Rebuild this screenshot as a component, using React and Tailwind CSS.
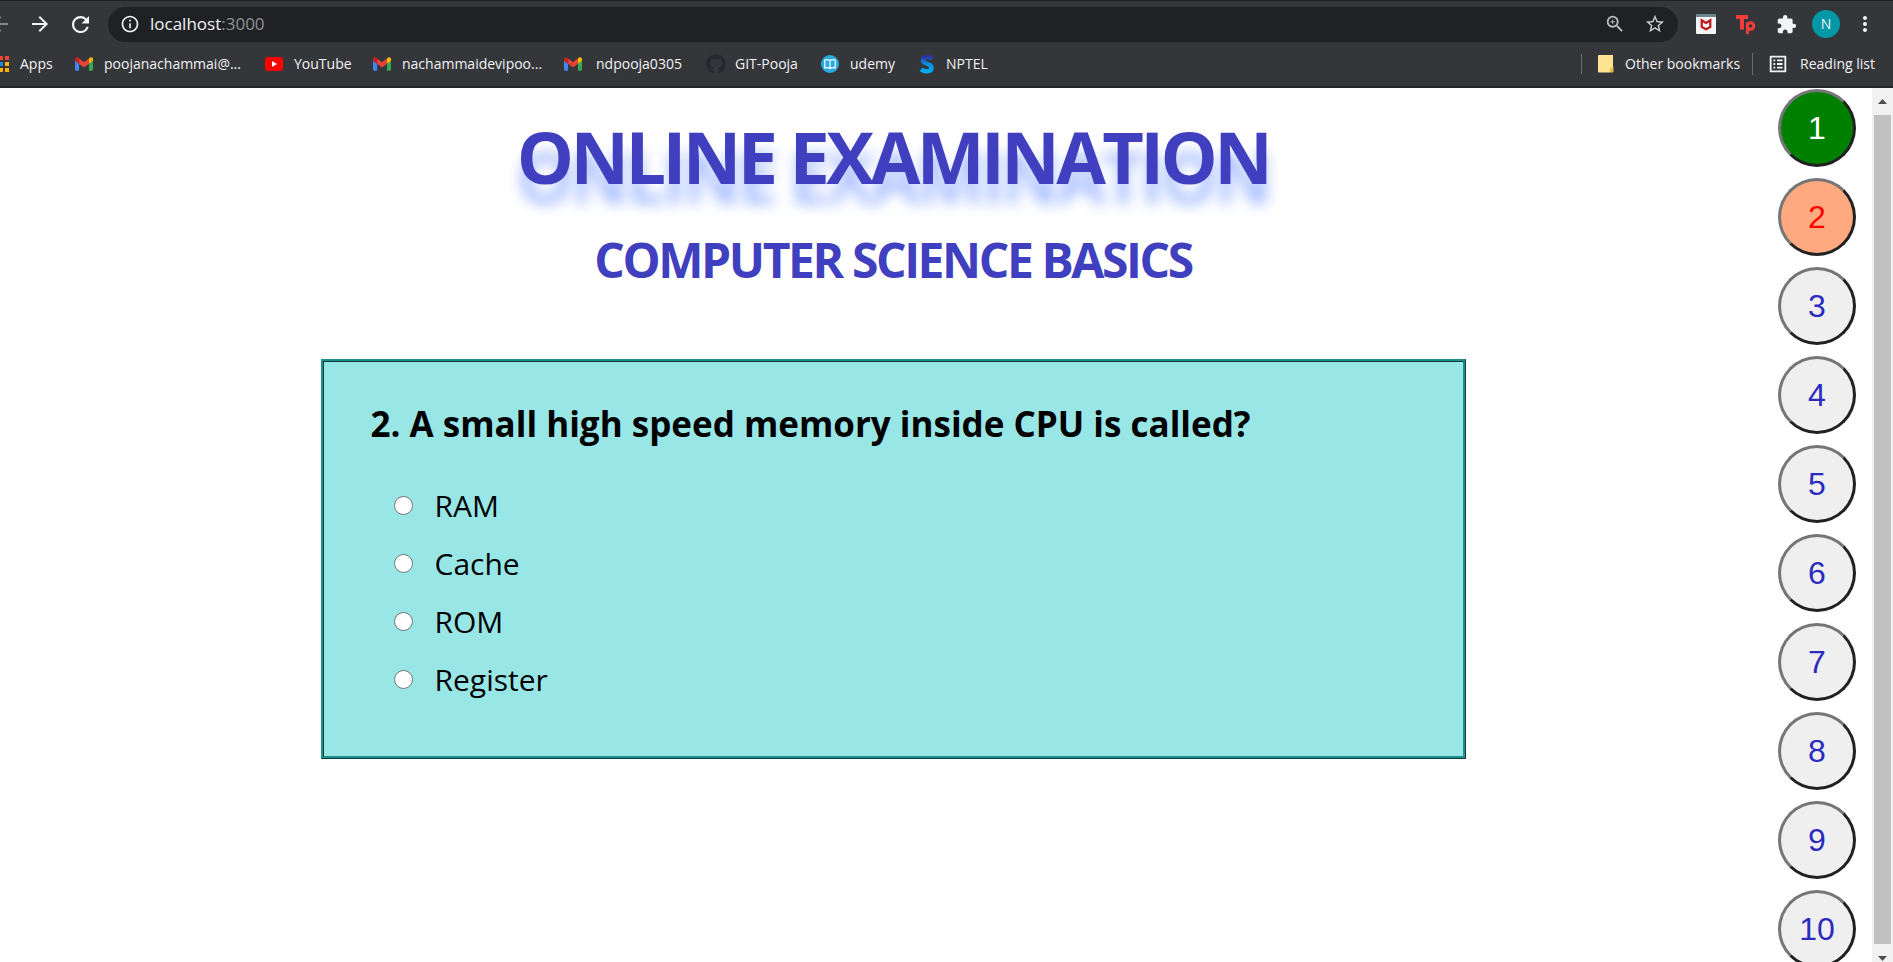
import { MdExtension, MdMoreVert, MdStarBorder, MdZoomIn, MdArrowBack, MdArrowForward, MdInfoOutline, MdOutlineListAlt } from "react-icons/md";
import { FaGithub } from "react-icons/fa";

function GmailIcon() {
  return (
    <svg viewBox="52 42 88 66" className="h-[14px] w-[18px]" aria-hidden="true">
      <path fill="#4285f4" d="M58 108h14V74L52 59v43c0 3.32 2.69 6 6 6" />
      <path fill="#34a853" d="M120 108h14c3.32 0 6-2.69 6-6V59l-20 15" />
      <path fill="#fbbc04" d="M120 48v26l20-15v-8c0-7.42-8.47-11.65-14.4-7.2" />
      <path fill="#ea4335" d="M72 74V48l24 18 24-18v26L96 92" />
      <path fill="#c5221f" d="M52 51v8l20 15V48l-5.6-4.2c-5.94-4.45-14.4-.22-14.4 7.2" />
    </svg>
  );
}

function AppsGridIcon() {
  const cells = [
    ["#f44336", 0, 0], ["#f44336", 6, 0], ["#f44336", 12, 0],
    ["#4caf50", 0, 6], ["#1e88e5", 6, 6], ["#ffb300", 12, 6],
    ["#4caf50", 0, 12], ["#ffb300", 6, 12], ["#ffb300", 12, 12],
  ];
  return (
    <svg viewBox="0 0 16 16" className="h-4 w-4" aria-hidden="true">
      {cells.map(([fill, x, y]) => (
        <rect key={`${x}-${y}`} x={x} y={y} width="4" height="4" fill={fill} />
      ))}
    </svg>
  );
}

function YouTubeIcon() {
  return (
    <svg viewBox="0 0 18 14" className="h-[14px] w-[18px]" aria-hidden="true">
      <rect width="18" height="14" rx="3" fill="#f00" />
      <path fill="#fff" d="M7 4v6l5-3z" />
    </svg>
  );
}

function UdemyIcon() {
  return (
    <svg viewBox="0 0 18 18" className="h-[18px] w-[18px]" aria-hidden="true">
      <circle cx="9" cy="9" r="9" fill="#29abe2" />
      <path fill="none" stroke="#fff" strokeWidth="1.2" d="M9 5.5Q6.5 4.2 3.8 5v8Q6.5 12.2 9 13.5Q11.5 12.2 14.2 13V5Q11.5 4.2 9 5.5V13.5" />
    </svg>
  );
}

function NptelIcon() {
  return (
    <svg viewBox="0 0 16 20" className="h-5 w-4" aria-hidden="true">
      <defs>
        <linearGradient id="nptel" x1="0" y1="0" x2="0" y2="1">
          <stop offset="0" stopColor="#2b35a0" />
          <stop offset="0.5" stopColor="#0c8fe0" />
          <stop offset="1" stopColor="#00aaf0" />
        </linearGradient>
      </defs>
      <path fill="none" stroke="url(#nptel)" strokeWidth="4.6" d="M13.3 4.5C10 2 4 2.5 4 6.2C4 10.2 12.5 9 12.5 13.5C12.5 18 6 18.2 2 15.3" />
    </svg>
  );
}

function NoteIcon() {
  return (
    <svg viewBox="0 0 16 18" className="h-[18px] w-4" aria-hidden="true">
      <path fill="#fee391" d="M1 0h14v12l-3 5.5H1a1 1 0 0 1-1-1V1a1 1 0 0 1 1-1z" />
      <path fill="#e3c04c" d="M12 17.5V13.5l3.5-2v5a1 1 0 0 1-1 1z" />
    </svg>
  );
}

function ReloadIcon() {
  return (
    <svg viewBox="4 4 16 16" className="h-[17px] w-[17px]" fill="currentColor" aria-hidden="true">
      <path d="M17.65 6.35A7.958 7.958 0 0 0 12 4a8 8 0 1 0 7.73 10h-2.08A5.99 5.99 0 0 1 12 18a6 6 0 1 1 0-12c1.66 0 3.14.69 4.22 1.78L13 11h7V4z" />
    </svg>
  );
}

function ShieldExtensionIcon() {
  return (
    <svg viewBox="0 0 20 20" className="h-5 w-5" aria-hidden="true">
      <rect width="20" height="20" rx="1" fill="#f4f6f6" />
      <rect width="20" height="3" fill="#6d8790" />
      <path fill="none" stroke="#c01818" strokeWidth="2.2" d="M5.7 6.3V13l4.3 2.2 4.3-2.2V6.3L10 9z" />
    </svg>
  );
}

function TpExtensionIcon() {
  return (
    <svg viewBox="0 0 20 20" className="h-5 w-5" fill="none" stroke="#f23d3a" aria-hidden="true">
      <path strokeWidth="4" d="M0 3h12M6 3v12.5" />
      <path strokeWidth="3" d="M11.5 20V8.5" />
      <circle cx="14.5" cy="12" r="3.3" strokeWidth="3" />
    </svg>
  );
}

const bookmarks = [
  { label: "Apps", icon: <AppsGridIcon />, item: "w-[82px]", gap: "gap-[11px]" },
  { label: "poojanachammai@...", icon: <GmailIcon />, item: "w-[190px]", gap: "gap-[11px]" },
  { label: "YouTube", icon: <YouTubeIcon />, item: "w-[108px]", gap: "gap-[11px]" },
  { label: "nachammaidevipoo...", icon: <GmailIcon />, item: "w-[191px]", gap: "gap-[11px]" },
  { label: "ndpooja0305", icon: <GmailIcon />, item: "w-[142px]", gap: "gap-[14px]" },
  { label: "GIT-Pooja", icon: <FaGithub className="h-5 w-5 text-[#24292e]" />, item: "w-[115px]", gap: "gap-[9px]" },
  { label: "udemy", icon: <UdemyIcon />, item: "w-[98px]", gap: "gap-[11px]" },
  { label: "NPTEL", icon: <NptelIcon />, item: "", gap: "gap-[11px]" },
];

function BrowserBar() {
  return (
    <header className="shrink-0 border-t border-b-2 border-t-[#202124] border-b-[#242528] bg-[#35363a] text-[#f1f3f4]">
      <div className="flex h-[46px] items-center">
        <button aria-label="Back" className="-ml-3 text-[#85868a]"><MdArrowBack className="h-6 w-6" /></button>
        <button aria-label="Forward" className="ml-4"><MdArrowForward className="h-6 w-6" /></button>
        <button aria-label="Reload" className="ml-5"><ReloadIcon /></button>
        <div className="ml-[19px] flex h-[35px] flex-1 items-center rounded-full bg-[#202124] px-3">
          <MdInfoOutline className="h-5 w-5 shrink-0" />
          <div className="ml-2.5 flex-1 text-[17px]">localhost<span className="text-[#8f9194]">:3000</span></div>
          <button aria-label="Zoom" className="text-[#b9bbbe]"><MdZoomIn className="h-[22px] w-[22px]" /></button>
          <button aria-label="Bookmark this page" className="ml-[18px] text-[#c8cacd]"><MdStarBorder className="h-[22px] w-[22px]" /></button>
        </div>
        <div className="ml-[18px] flex items-center">
          <button aria-label="Shield extension"><ShieldExtensionIcon /></button>
          <button aria-label="Tp extension" className="ml-5"><TpExtensionIcon /></button>
          <button aria-label="Extensions" className="ml-5"><MdExtension className="h-[21px] w-[21px]" /></button>
          <button aria-label="Profile" className="ml-[15px] h-7 w-7 rounded-full bg-[#0097a7] text-sm">N</button>
          <button aria-label="Menu" className="mr-4 ml-[13px]"><MdMoreVert className="h-6 w-6" /></button>
        </div>
      </div>
      <nav className="flex h-[39px] items-center pb-1.5 text-sm whitespace-nowrap">
        <div className="-ml-[7px] flex flex-1 items-center">
          {bookmarks.map((b) => (
            <a key={b.label} href="#" className={`flex shrink-0 items-center ${b.gap} ${b.item}`}>
              {b.icon}
              {b.label}
            </a>
          ))}
        </div>
        <a href="#" className="flex items-center gap-[11px] border-l border-[#6b6c70] pl-4"><NoteIcon />Other bookmarks</a>
        <a href="#" className="mr-[18px] ml-3 flex items-center gap-[11px] border-l border-[#6b6c70] pl-3.5"><MdOutlineListAlt className="h-[22px] w-[22px]" />Reading list</a>
      </nav>
    </header>
  );
}

const options = ["RAM", "Cache", "ROM", "Register"];

const statusStyles = {
  answered: "bg-[#008000] text-white",
  current: "bg-[#ffa980] text-[#ff0000]",
  open: "bg-[#efefef] text-[#2b2bc0]",
};

const questions = Array.from({ length: 10 }, (_, i) => ({
  number: i + 1,
  status: i === 0 ? "answered" : i === 1 ? "current" : "open",
}));

function Question() {
  return (
    <section className="mt-[65px] w-full max-w-[1145px] border-[3px] border-[#20908d] bg-[#99e6e6] pt-[38px] pb-[55px] pl-[47px] text-black [border-style:ridge]">
      <h3 id="question" className="text-[35px] leading-[48px] font-bold">2. A small high speed memory inside CPU is called?</h3>
      <div role="radiogroup" aria-labelledby="question" className="mt-[35px] flex flex-col gap-[14px] pl-[23px]">
        {options.map((option) => (
          <label key={option} className="flex h-11 items-center gap-[22px] text-[30px]">
            <input type="radio" name="answer" className="h-[19px] w-[19px] appearance-none rounded-full border border-[#767676] bg-white checked:border-[6px] checked:border-[#0075ff]" />
            {option}
          </label>
        ))}
      </div>
    </section>
  );
}

function ScrollBar() {
  return (
    <div aria-hidden="true" className="flex w-[21px] shrink-0 flex-col items-center bg-[#f1f1f1]">
      <div className="flex h-[27px] items-center">
        <svg viewBox="0 0 9 5" className="h-[5px] w-[9px]"><path fill="#505050" d="M0 5L4.5 0L9 5z" /></svg>
      </div>
      <div className="w-[17px] flex-1 bg-[#c1c1c1]" />
      <div className="flex h-[18px] items-end pb-px">
        <svg viewBox="0 0 9 5" className="h-[5px] w-[9px]"><path fill="#505050" d="M0 0L4.5 5L9 0z" /></svg>
      </div>
    </div>
  );
}

export default function App() {
  return (
    <div className="flex h-screen flex-col overflow-hidden bg-white font-['Segoe_UI','Open_Sans','Noto_Sans',sans-serif]">
      <BrowserBar />
      <div className="flex min-h-0 flex-1">
        <main className="flex min-w-0 flex-1 flex-col items-center pl-2 text-[#403fbf]">
          <h1 className="mt-[18px] text-[72px] leading-[100px] font-bold tracking-tighter [text-shadow:0_20px_14px_#a9bfff]">ONLINE EXAMINATION</h1>
          <h2 className="mt-[20px] text-[48px] leading-[68px] font-bold tracking-tighter">COMPUTER SCIENCE BASICS</h2>
          <Question />
        </main>
        <nav aria-label="Questions" className="flex w-[94px] shrink-0 flex-col gap-[11px] overflow-hidden pt-px font-['Liberation_Sans',Arial,sans-serif] text-[32px]">
          {questions.map((q) => (
            <button key={q.number} className={`h-[78px] w-[78px] shrink-0 rounded-full border-[3px] border-t-[#767676] border-r-[#212121] border-b-[#212121] border-l-[#767676] ${statusStyles[q.status]}`}>
              {q.number}
            </button>
          ))}
        </nav>
        <ScrollBar />
      </div>
    </div>
  );
}
